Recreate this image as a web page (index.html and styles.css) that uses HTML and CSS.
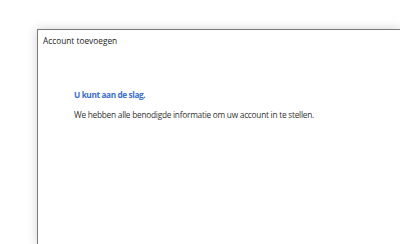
FILE: index.html
```html
<!DOCTYPE html>
<html>
<head>
<meta charset="utf-8">
<link rel="stylesheet" href="styles.css">
</head>
<body>
<div class="desk">
  <div class="window">
    <div class="title">Account toevoegen</div>
    <div class="content">
      <div class="heading">U kunt aan de slag.</div>
      <div class="text">We hebben alle benodigde informatie om uw account in te stellen.</div>
    </div>
  </div>
</div>
</body>
</html>
```
FILE: styles.css
```css
html, body {
  margin: 0;
  padding: 0;
  width: 400px;
  height: 244px;
  overflow: hidden;
  background: #ffffff;
  font-family: "Open Sans", "Noto Sans", sans-serif;
}
.desk {
  padding: 29px 0 0 37px;
  height: 244px;
  box-sizing: border-box;
  overflow: hidden;
}
.window {
  height: 215px;
  border-top: 1px solid #7a7a7a;
  border-left: 1px solid #7a7a7a;
  background: #fff;
  box-shadow: 0 0 10px rgba(0,0,0,0.18);
}
.title {
  font-size: 8.3px;
  color: #222;
  padding: 5px 0 0 5px;
  line-height: 12px;
}
.content {
  padding: 42px 0 0 36px;
}
.heading {
  font-size: 8.3px;
  font-weight: 700;
  letter-spacing: -0.4px;
  color: #3e6fc8;
  line-height: 12px;
}
.text {
  margin-top: 8px;
  font-size: 8.3px;
  letter-spacing: -0.25px;
  color: #333;
  line-height: 12px;
}
```
